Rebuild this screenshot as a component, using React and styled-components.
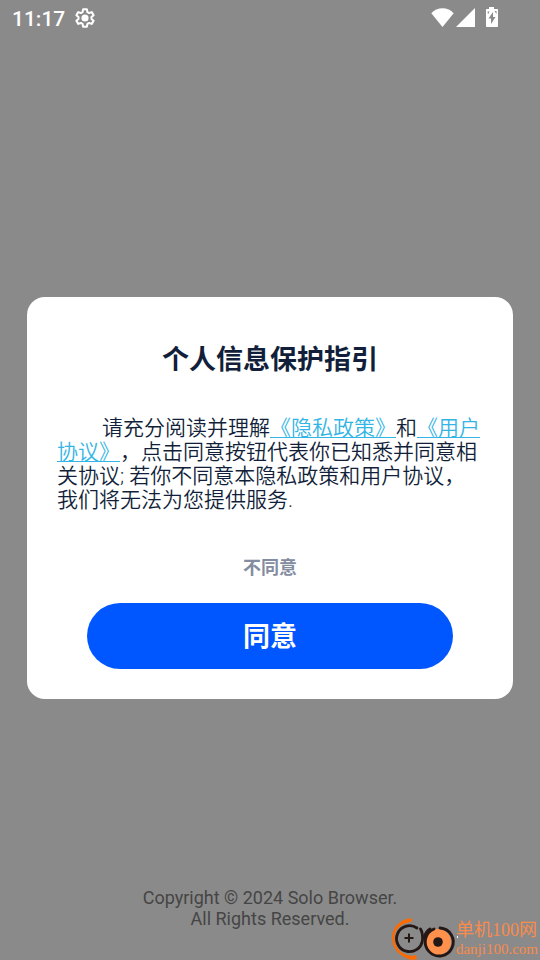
import React, { useState } from "react";
import styled, { createGlobalStyle } from "styled-components";

const GlobalStyle = createGlobalStyle`
    * {
        box-sizing: border-box;
    }

    body {
        margin: 0;
        background: #8a8a8a;
        font-family: Roboto, "Noto Sans CJK SC", sans-serif;
        text-spacing-trim: space-all;
    }
`;

const Page = styled.div`
    position: relative;
    display: flex;
    flex-direction: column;
    min-height: 100vh;
    overflow: hidden;
`;

const StatusBar = styled.header`
    display: flex;
    align-items: center;
    justify-content: space-between;
    height: 36px;
    padding: 0 41px 0 12px;
    color: #fff;
`;

const StatusGroup = styled.div`
    display: flex;
    align-items: center;
    gap: ${({ $gap }) => $gap}px;
`;

const Clock = styled.time`
    padding-top: 2px;
    font-size: 21px;
    font-weight: 500;
    line-height: 24px;
`;

// the splash screen and the dialog share one grid cell
const Stage = styled.main`
    flex: 1;
    display: grid;
    grid-template-columns: 100%;

    > * {
        grid-area: 1 / 1;
    }
`;

const Copyright = styled.footer`
    align-self: end;
    padding-bottom: 31px;
    color: #454545;
    font-size: 18px;
    line-height: 21px;
    text-align: center;
`;

const Dialog = styled.section`
    display: flex;
    flex-direction: column;
    align-self: center;
    margin: 0 27px;
    padding: 44px 30px 30px;
    border-radius: 18px;
    background: #fff;
    color: #121f3a;
    z-index: 1;
`;

const Title = styled.h1`
    margin: 0 0 37px;
    font-size: 27px;
    font-weight: 700;
    line-height: 38px;
    text-align: center;
`;

const Message = styled.p`
    margin: 0 0 38px;
    font-size: 21px;
    font-weight: 350;
    line-height: 24px;
    text-indent: 45px;
`;

const PolicyLink = styled.a`
    color: #33b5e5;
    text-decoration: underline;
    text-decoration-thickness: 1px;
    text-underline-offset: 2px;
`;

const Button = styled.button`
    border: 0;
    font-family: inherit;
    font-weight: 700;
    cursor: pointer;
`;

const DeclineButton = styled(Button)`
    align-self: center;
    margin-bottom: 17px;
    padding: 5px 20px;
    background: transparent;
    color: #838ca0;
    font-size: 18px;
    line-height: 26px;
`;

const AgreeButton = styled(Button)`
    height: 66px;
    margin: 0 30px;
    padding: 0 20px 3px;
    border-radius: 33px;
    background: #0056ff;
    color: #fff;
    font-size: 27px;
`;

const Watermark = styled.aside`
    position: absolute;
    right: 2px;
    bottom: 0;
    display: flex;
    align-items: center;
    z-index: 2;
    color: #f98b4c;
    font-family: "Liberation Serif", "Noto Sans CJK SC", serif;
`;

const SiteName = styled.div`
    font-size: 18px;
    line-height: 20px;
`;

const SiteUrl = styled.div`
    font-size: 15px;
    line-height: 18px;
`;

const GearIcon = () => (
    <svg width="22" height="22" viewBox="0 0 24 24" fill="none" stroke="currentColor" strokeWidth="2.2" strokeLinejoin="round">
        <path d="M10 2.500h4l.6 3 1.900 1.100 2.900-1 2 3.400-2.300 2v2l2.300 2-2 3.400-2.900-1-1.900 1.100-.6 3h-4l-.6-3-1.900-1.100-2.900 1-2-3.400 2.300-2v-2l-2.300-2 2-3.400 2.900 1 1.900-1.100z" />
        <circle cx="12" cy="12" r="3.9" fill="currentColor" stroke="none" />
    </svg>
);

const WifiIcon = () => (
    <svg width="24" height="20" viewBox="0 0 24 20" fill="currentColor">
        <path d="M11.500 19 .3 5.200C3.400 2.200 7.200.3 11.500.3s8.100 1.900 11.200 4.900z" />
    </svg>
);

const SignalIcon = () => (
    <svg width="20" height="20" viewBox="0 0 20 20" fill="currentColor">
        <path d="M19 0v19H0z" />
    </svg>
);

const BatteryIcon = () => (
    <svg width="14" height="22" viewBox="0 0 14 22">
        <path fill="currentColor" d="M4 0h5v2h3c.6 0 1 .4 1 1v16c0 .6-.4 1-1 1H2c-.6 0-1-.4-1-1V3c0-.6.4-1 1-1h2z" />
        <path fill="#8a8a8a" d="M8 5v5h2.500L6 17v-5.500H3.500z" />
        <path fill="#8a8a8a" d="M2.500 4.500h2l-1.500 3zM9.500 4h2v3z" />
    </svg>
);

const SignalIcons = styled(StatusGroup)`
    margin-right: 9px;
`;

const Logo = () => (
    <svg width="66" height="42" viewBox="0 0 66 42" fill="none" overflow="visible">
        <path d="M21 0C9 2 2 10 2 20c0 11 8 19 20 22l5-1-1-4c-3 1-6 1-9 0C9 34 4.500 28 4.500 20S9 7 18 4.500l4-1z" fill="#ff6a00" />
        <path d="M27 10a13 13 0 1 0 5.500 12c.3-4-.2-8-2-11" stroke="#231815" strokeWidth="2.800" strokeLinecap="round" />
        <path d="M19 15.500v9M14.500 20h9" stroke="#231815" strokeWidth="2" />
        <circle cx="48" cy="24" r="13" fill="#ff914d" />
        <path d="M44 11a14 14 0 1 0 6-1M34 20c1-4 3-7 6-9" stroke="#231815" strokeWidth="2.800" strokeLinecap="round" />
        <circle cx="48" cy="24" r="4.800" fill="#231815" />
        <path d="M67 18h1v2h-1z" fill="#fff" />
    </svg>
);

const App = () => {
    const [isOpen, setIsOpen] = useState(true);

    const closeDialog = () => {
        setIsOpen(false);
    };

    return (
        <Page lang="zh-CN">
            <GlobalStyle />
            <StatusBar>
                <StatusGroup $gap={9}>
                    <Clock>11:17</Clock>
                    <GearIcon />
                </StatusGroup>
                <StatusGroup $gap={0}>
                    <SignalIcons $gap={1}>
                        <WifiIcon />
                        <SignalIcon />
                    </SignalIcons>
                    <BatteryIcon />
                </StatusGroup>
            </StatusBar>
            <Stage>
                <Copyright>
                    Copyright © 2024 Solo Browser.
                    <br />
                    All Rights Reserved.
                </Copyright>
                { isOpen && (
                    <Dialog role="dialog" aria-labelledby="guide-title">
                        <Title id="guide-title">个人信息保护指引</Title>
                        <Message>
                            请充分阅读并理解<PolicyLink href="#privacy">《隐私政策》</PolicyLink>和<PolicyLink href="#terms">《用户协议》</PolicyLink>，点击同意按钮代表你已知悉并同意相关协议; 若你不同意本隐私政策和用户协议，我们将无法为您提供服务.
                        </Message>
                        <DeclineButton type="button" onClick={closeDialog}>不同意</DeclineButton>
                        <AgreeButton type="button" onClick={closeDialog}>同意</AgreeButton>
                    </Dialog>
                )}
            </Stage>
            <Watermark>
                <Logo />
                <div>
                    <SiteName>单机100网</SiteName>
                    <SiteUrl>danji100.com</SiteUrl>
                </div>
            </Watermark>
        </Page>
    );
};

export default App;
